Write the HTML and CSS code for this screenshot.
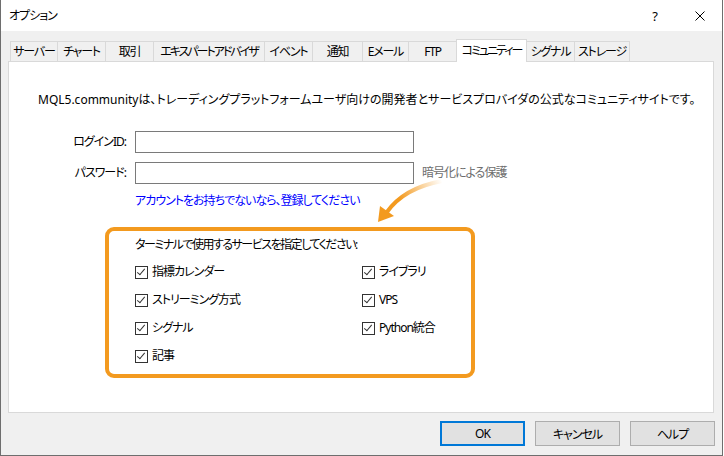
FILE: index.html
```html
<!DOCTYPE html>
<html lang="ja">
<head>
    <meta charset="UTF-8">
    <meta name="viewport" content="width=device-width, initial-scale=1.0">
    <title>オプション</title>
    <link rel="stylesheet" href="styles.css">
</head>
<body>
    <div class="window">
        <!-- Title bar -->
        <div class="titlebar">
            <span class="title">オプション</span>
            <div class="caption-buttons">
                <span class="cap-btn">?</span>
                <span class="cap-btn">
                    <svg width="10" height="10" viewBox="0 0 10 10">
                        <path d="M0.5 0.5 L9.5 9.5 M9.5 0.5 L0.5 9.5" stroke="#000" stroke-width="1" fill="none"/>
                    </svg>
                </span>
            </div>
        </div>

        <div class="client">
            <!-- Tabs -->
            <ul class="tabs">
                <li class="tab">サーバー</li>
                <li class="tab">チャート</li>
                <li class="tab">取引</li>
                <li class="tab tight">エキスパートアドバイザ</li>
                <li class="tab">イベント</li>
                <li class="tab">通知</li>
                <li class="tab">Eメール</li>
                <li class="tab">FTP</li>
                <li class="tab tight active">コミュニティー</li>
                <li class="tab">シグナル</li>
                <li class="tab">ストレージ</li>
            </ul>

            <!-- Community page -->
            <div class="panel">
                <p class="intro">MQL5.communityは、トレーディングプラットフォームユーザ向けの開発者とサービスプロバイダの公式なコミュニティサイトです。</p>

                <div class="login-form">
                    <label class="field-label">ログインID:</label>
                    <div class="input"></div>
                    <span></span>

                    <label class="field-label">パスワード:</label>
                    <div class="input"></div>
                    <span class="note">暗号化による保護</span>

                    <span></span>
                    <a class="signup" href="#">アカウントをお持ちでないなら、登録してください</a>
                </div>

                <div class="services">
                    <p class="services-title">ターミナルで使用するサービスを指定してください:</p>
                    <div class="service-grid">
                        <label class="check"><span class="box"></span>指標カレンダー</label>
                        <label class="check"><span class="box"></span>ライブラリ</label>
                        <label class="check"><span class="box"></span>ストリーミング方式</label>
                        <label class="check"><span class="box"></span>VPS</label>
                        <label class="check"><span class="box"></span>シグナル</label>
                        <label class="check"><span class="box"></span>Python統合</label>
                        <label class="check"><span class="box"></span>記事</label>
                    </div>
                </div>
            </div>

            <!-- Dialog buttons -->
            <div class="actions">
                <button class="btn default">OK</button>
                <button class="btn">キャンセル</button>
                <button class="btn">ヘルプ</button>
            </div>
        </div>

        <!-- Callout arrow over the content -->
        <svg class="callout-arrow" width="80" height="52" viewBox="370 175 80 52">
            <defs>
                <linearGradient id="fade" gradientUnits="userSpaceOnUse" x1="442" y1="181" x2="400" y2="200">
                    <stop offset="0" stop-color="#f39a1f" stop-opacity="0"/>
                    <stop offset="1" stop-color="#f39a1f" stop-opacity="1"/>
                </linearGradient>
            </defs>
            <path d="M442 181 Q404 188 387 212" stroke="url(#fade)" stroke-width="4" fill="none"/>
            <polygon points="378,222 380,206 394,216" fill="#f39a1f"/>
        </svg>
    </div>
</body>
</html>
```

FILE: styles.css
```css
/* General styles */
body {
    margin: 0;
    padding: 0;
    background-color: #ffffff;
    font-family: "Noto Sans", "Noto Sans CJK JP", sans-serif;
    font-size: 12px;
    line-height: 16px;
    color: #000000;
    font-feature-settings: "palt";
    letter-spacing: -1px;
}

.window {
    position: relative;
    width: 723px;
    height: 456px;
    box-sizing: border-box;
    border: 1px solid #6e6e6e;
    border-top: none;
    background-color: #f0f0f0;
    overflow: hidden;
}

/* Title bar */
.titlebar {
    display: flex;
    align-items: center;
    justify-content: space-between;
    height: 31px;
    padding-left: 8px;
    background-color: #ffffff;
}

.caption-buttons {
    display: flex;
    height: 100%;
}

.cap-btn {
    display: flex;
    align-items: center;
    justify-content: center;
    width: 45px;
    font-size: 13px;
}

/* Client area */
.client {
    padding-top: 8px;
}

/* Tabs */
.tabs {
    display: flex;
    align-items: flex-end;
    list-style: none;
    margin: 0 0 0 9px;
    padding: 0;
    height: 22px;
}

.tab {
    height: 20px;
    box-sizing: border-box;
    padding: 0;
    border: 1px solid #d9d9d9;
    border-bottom: none;
    margin-left: -1px;
    line-height: 19px;
    text-align: center;
    white-space: nowrap;
    letter-spacing: -1.2px;
}

.tab.tight {
    letter-spacing: -2px;
}

.tab:first-child {
    margin-left: 0;
}

/* Fixed tab widths, as the dialog lays them out */
.tab:nth-child(1) { width: 48px; }
.tab:nth-child(2) { width: 49px; }
.tab:nth-child(3) { width: 49px; }
.tab:nth-child(4) { width: 112px; }
.tab:nth-child(5) { width: 49px; }
.tab:nth-child(6) { width: 51px; }
.tab:nth-child(7) { width: 47px; }
.tab:nth-child(8) { width: 49px; }
.tab:nth-child(9) { width: 71px; }
.tab:nth-child(10) { width: 49px; }
.tab:nth-child(11) { width: 56px; }

.tab.active {
    position: relative;
    z-index: 1;
    height: 23px;
    margin-bottom: -1px;
    background-color: #ffffff;
    line-height: 21px;
}

/* Panel */
.panel {
    height: 352px;
    box-sizing: border-box;
    margin: 0 8px 0 7px;
    padding: 30px 0 0 29px;
    border: 1px solid #d9d9d9;
    background-color: #ffffff;
}

.intro {
    margin: 0;
    white-space: nowrap;
    letter-spacing: 0;
}

/* Login form */
.login-form {
    display: grid;
    grid-template-columns: 88px 279px auto;
    column-gap: 9px;
    row-gap: 9px;
    align-items: center;
    margin-top: 23px;
}

.field-label {
    text-align: right;
}

.input {
    height: 22px;
    box-sizing: border-box;
    border: 1px solid #7a7a7a;
    background-color: #ffffff;
}

.note {
    margin-left: -1px;
    color: #6d6d6d;
}

.signup {
    grid-column: 2 / 4;
    color: #0000ff;
    text-decoration: none;
    white-space: nowrap;
}

/* Services box */
.services {
    width: 370px;
    height: 151px;
    box-sizing: border-box;
    margin: 18px 0 0 67px;
    padding: 6px 0 4px 26px;
    border: 4px solid #f39a1f;
    border-radius: 9px;
}

.services-title {
    margin: 0 0 5px 0;
    letter-spacing: -1.5px;
}

.service-grid {
    display: grid;
    grid-template-columns: 227px auto;
    grid-auto-rows: 28px;
}

.check {
    display: flex;
    align-items: center;
    gap: 4px;
}

.box {
    position: relative;
    width: 13px;
    height: 13px;
    box-sizing: border-box;
    border: 1px solid #333333;
    background-color: #ffffff;
}

/* Check mark */
.box::after {
    content: "";
    position: absolute;
    left: 3px;
    top: 0px;
    width: 3px;
    height: 7px;
    border-right: 1px solid #333333;
    border-bottom: 1px solid #333333;
    transform: rotate(40deg);
}

/* Dialog buttons */
.actions {
    display: flex;
    justify-content: flex-end;
    gap: 10px;
    margin: 8px 7px 0 0;
}

.btn {
    width: 85px;
    height: 25px;
    box-sizing: border-box;
    border: 1px solid #adadad;
    background-color: #e1e1e1;
    font-family: inherit;
    font-size: 12px;
    font-feature-settings: "palt";
    letter-spacing: -1px;
    color: #000000;
    padding: 0;
}

.btn.default {
    border: 2px solid #0078d7;
}

/* Callout arrow */
.callout-arrow {
    position: absolute;
    left: 369px;
    top: 175px;
}
```
